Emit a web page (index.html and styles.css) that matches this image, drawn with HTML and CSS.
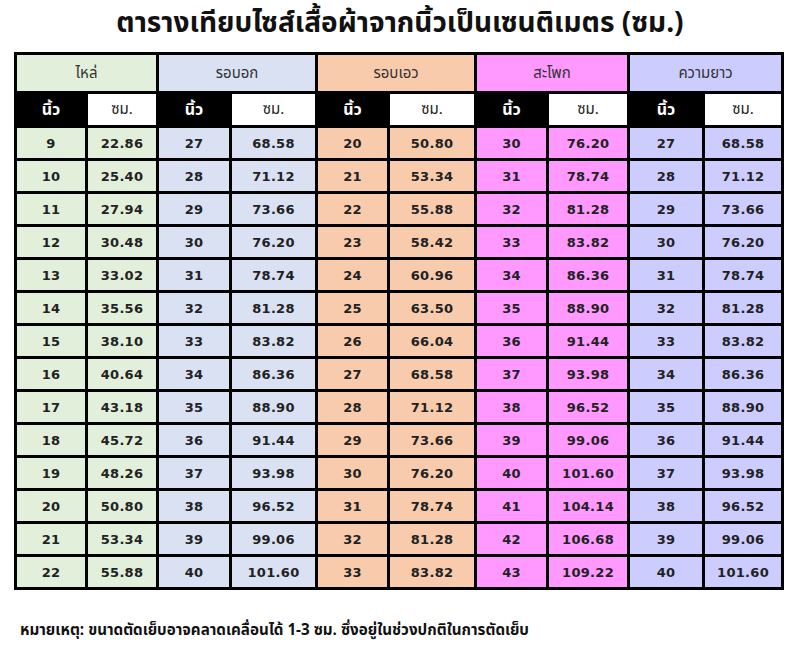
FILE: index.html
```html
<!DOCTYPE html>
<html lang="th">
<head>
<meta charset="utf-8">
<title>ตารางเทียบไซส์เสื้อผ้า</title>
<link rel="stylesheet" href="styles.css">
</head>
<body>
<h1 class="title">ตารางเทียบไซส์เสื้อผ้าจากนิ้วเป็นเซนติเมตร (ซม.)</h1>
<table class="chart">
<colgroup>
<col class="c1"><col class="c2"><col class="c3"><col class="c4"><col class="c5"><col class="c6"><col class="c7"><col class="c8"><col class="c9"><col class="c10">
</colgroup>
<thead>
<tr class="group">
<th colspan="2" class="g1">ไหล่</th>
<th colspan="2" class="g2">รอบอก</th>
<th colspan="2" class="g3">รอบเอว</th>
<th colspan="2" class="g4">สะโพก</th>
<th colspan="2" class="g5">ความยาว</th>
</tr>
<tr class="sub">
<th class="in">นิ้ว</th><th class="cm">ซม.</th>
<th class="in">นิ้ว</th><th class="cm">ซม.</th>
<th class="in">นิ้ว</th><th class="cm">ซม.</th>
<th class="in">นิ้ว</th><th class="cm">ซม.</th>
<th class="in">นิ้ว</th><th class="cm">ซม.</th>
</tr>
</thead>
<tbody>
<tr><td class="g1">9</td><td class="g1">22.86</td><td class="g2">27</td><td class="g2">68.58</td><td class="g3">20</td><td class="g3">50.80</td><td class="g4">30</td><td class="g4">76.20</td><td class="g5">27</td><td class="g5">68.58</td></tr>
<tr><td class="g1">10</td><td class="g1">25.40</td><td class="g2">28</td><td class="g2">71.12</td><td class="g3">21</td><td class="g3">53.34</td><td class="g4">31</td><td class="g4">78.74</td><td class="g5">28</td><td class="g5">71.12</td></tr>
<tr><td class="g1">11</td><td class="g1">27.94</td><td class="g2">29</td><td class="g2">73.66</td><td class="g3">22</td><td class="g3">55.88</td><td class="g4">32</td><td class="g4">81.28</td><td class="g5">29</td><td class="g5">73.66</td></tr>
<tr><td class="g1">12</td><td class="g1">30.48</td><td class="g2">30</td><td class="g2">76.20</td><td class="g3">23</td><td class="g3">58.42</td><td class="g4">33</td><td class="g4">83.82</td><td class="g5">30</td><td class="g5">76.20</td></tr>
<tr><td class="g1">13</td><td class="g1">33.02</td><td class="g2">31</td><td class="g2">78.74</td><td class="g3">24</td><td class="g3">60.96</td><td class="g4">34</td><td class="g4">86.36</td><td class="g5">31</td><td class="g5">78.74</td></tr>
<tr><td class="g1">14</td><td class="g1">35.56</td><td class="g2">32</td><td class="g2">81.28</td><td class="g3">25</td><td class="g3">63.50</td><td class="g4">35</td><td class="g4">88.90</td><td class="g5">32</td><td class="g5">81.28</td></tr>
<tr><td class="g1">15</td><td class="g1">38.10</td><td class="g2">33</td><td class="g2">83.82</td><td class="g3">26</td><td class="g3">66.04</td><td class="g4">36</td><td class="g4">91.44</td><td class="g5">33</td><td class="g5">83.82</td></tr>
<tr><td class="g1">16</td><td class="g1">40.64</td><td class="g2">34</td><td class="g2">86.36</td><td class="g3">27</td><td class="g3">68.58</td><td class="g4">37</td><td class="g4">93.98</td><td class="g5">34</td><td class="g5">86.36</td></tr>
<tr><td class="g1">17</td><td class="g1">43.18</td><td class="g2">35</td><td class="g2">88.90</td><td class="g3">28</td><td class="g3">71.12</td><td class="g4">38</td><td class="g4">96.52</td><td class="g5">35</td><td class="g5">88.90</td></tr>
<tr><td class="g1">18</td><td class="g1">45.72</td><td class="g2">36</td><td class="g2">91.44</td><td class="g3">29</td><td class="g3">73.66</td><td class="g4">39</td><td class="g4">99.06</td><td class="g5">36</td><td class="g5">91.44</td></tr>
<tr><td class="g1">19</td><td class="g1">48.26</td><td class="g2">37</td><td class="g2">93.98</td><td class="g3">30</td><td class="g3">76.20</td><td class="g4">40</td><td class="g4">101.60</td><td class="g5">37</td><td class="g5">93.98</td></tr>
<tr><td class="g1">20</td><td class="g1">50.80</td><td class="g2">38</td><td class="g2">96.52</td><td class="g3">31</td><td class="g3">78.74</td><td class="g4">41</td><td class="g4">104.14</td><td class="g5">38</td><td class="g5">96.52</td></tr>
<tr><td class="g1">21</td><td class="g1">53.34</td><td class="g2">39</td><td class="g2">99.06</td><td class="g3">32</td><td class="g3">81.28</td><td class="g4">42</td><td class="g4">106.68</td><td class="g5">39</td><td class="g5">99.06</td></tr>
<tr><td class="g1">22</td><td class="g1">55.88</td><td class="g2">40</td><td class="g2">101.60</td><td class="g3">33</td><td class="g3">83.82</td><td class="g4">43</td><td class="g4">109.22</td><td class="g5">40</td><td class="g5">101.60</td></tr>
</tbody>
</table>
<p class="note">หมายเหตุ: ขนาดตัดเย็บอาจคลาดเคลื่อนได้ 1-3 ซม. ซึ่งอยู่ในช่วงปกติในการตัดเย็บ</p>
</body>
</html>
```
FILE: styles.css
```css
html, body {
  margin: 0;
  padding: 0;
  background: #ffffff;
}
body {
  width: 800px;
  font-family: Tahoma, "Noto Sans Thai", "Noto Sans", "DejaVu Sans", sans-serif;
  color: #222;
}
.title {
  margin: 0;
  padding-top: 5px;
  height: 47px;
  text-align: center;
  font-size: 28px;
  line-height: 38px;
  font-weight: bold;
  color: #111;
}
.chart {
  margin-left: 14px;
  width: 770px;
  table-layout: fixed;
  border-collapse: separate;
  border-spacing: 3px;
  background: #000;
}
.c1 { width: 68px; }
.c2 { width: 68px; }
.c3 { width: 70px; }
.c4 { width: 83px; }
.c5 { width: 69px; }
.c6 { width: 84px; }
.c7 { width: 69px; }
.c8 { width: 78px; }
.c9 { width: 72px; }
.c10 { width: 76px; }
.chart th, .chart td {
  padding: 0;
  text-align: center;
  vertical-align: middle;
}
.group th {
  height: 36px;
  font-size: 15px;
  font-weight: normal;
  color: #333;
}
.sub th {
  height: 31px;
  font-size: 15px;
}
.sub .in {
  background: #000;
  color: #fff;
  font-weight: bold;
  font-size: 16px;
}
.sub .cm {
  background: #fff;
  color: #222;
  font-weight: normal;
}
.chart td {
  height: 30px;
  font-family: Verdana, "DejaVu Sans", sans-serif;
  font-weight: bold;
  font-size: 13px;
  letter-spacing: 0.3px;
  color: #222;
}
.g1 { background: #e2efda; }
.g2 { background: #d9e1f2; }
.g3 { background: #f8cbad; }
.g4 { background: #ff99ff; }
.g5 { background: #ccccff; }
.note {
  margin: 29px 0 0 20px;
  font-size: 15.2px;
  font-weight: bold;
  color: #111;
}
```
